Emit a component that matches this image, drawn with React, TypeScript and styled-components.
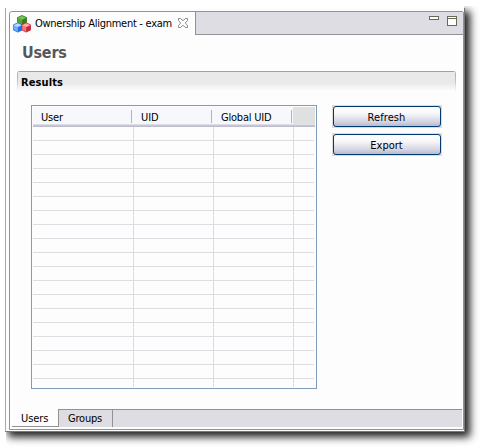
import React from "react";
import styled, { createGlobalStyle } from "styled-components";

const Global = createGlobalStyle`
  * { box-sizing: border-box; }
  body { margin: 0; background: #fff; overflow: hidden; }
`;

const Page = styled.div`
  width: 480px;
  height: 447px;
  padding: 8px 0 0 5px;
  background: #fff;
  color: #000;
  font: 11px/14px "DejaVu Sans Condensed", "DejaVu Sans", sans-serif;
  font-stretch: condensed;
`;

const Label = styled.span<{ $spacing?: number }>`
  white-space: nowrap;
  letter-spacing: ${(p) => p.$spacing ?? 0}px;
`;

const Shell = styled.div`
  width: 460px;
  height: 424px;
  padding: 3px 0 0 3px;
  background: #fdfdfd;
  border-left: 1px solid #a9a9ad;
  border-right: 1px solid #777;
  border-bottom: 1px solid #777;
  box-shadow: 4px 4px 8px 1px rgba(0, 0, 0, 0.88);
  clip-path: polygon(0 0, 459px 0, 459px -2px, 475px -2px, 475px 439px, 1px 439px, 1px 424px, 0 424px);
`;

const Frame = styled.div`
  display: flex;
  flex-direction: column;
  width: 455px;
  height: 419px;
  border: 1px solid #929295;
  border-radius: 3px 2px 0 0;
  background: #fdfdfd;
`;

const TabBar = styled.header`
  display: flex;
  height: 23px;
  flex: none;
`;

const EditorTab = styled.div`
  display: flex;
  align-items: flex-start;
  width: 185px;
  padding: 3px 0 0 3px;
  background: #fdfdfd;
  border-radius: 3px 0 0 0;

  > span { width: 143px; margin: 2px 0 0 4px; }
  > svg:last-child { margin-top: 3px; }
`;

const TabBarRest = styled.div`
  display: flex;
  flex: 1;
  justify-content: flex-end;
  gap: 8px;
  padding: 4px 6px 0 0;
  background: #dedde3;
  border-left: 1px solid #929295;
  border-bottom: 1px solid #929295;

  svg { display: block; }
`;

const Content = styled.main`
  display: flex;
  flex-direction: column;
  flex: 1;
  padding: 9px 7px 0;
`;

const Title = styled.h1`
  height: 18px;
  margin: 0 0 9px 5px;
  font-size: 16px;
  line-height: 18px;
  color: #57575b;
`;

const SectionHeader = styled.h2`
  width: 439px;
  height: 21px;
  margin: 0;
  padding: 5px 0 0 4px;
  font-size: 11px;
  line-height: 14px;
  border-radius: 3px 3px 0 0;
  background: linear-gradient(#a0a0a0, #a0a0a0) top / 100% 1px no-repeat,
    linear-gradient(#aaa, #bbb 8px, #fdfdfd) left / 1px 100% no-repeat,
    linear-gradient(#aaa, #bbb 8px, #fdfdfd) right / 1px 100% no-repeat,
    linear-gradient(#e9e9e9 12px, #fdfdfd 20px);
`;

const SectionBody = styled.section`
  display: flex;
  gap: 15px;
  padding: 13px 0 0 14px;
`;

const Table = styled.div`
  display: flex;
  flex-direction: column;
  width: 286px;
  height: 284px;
  padding: 1px;
  border: 1px solid #7f9db9;
`;

const HeaderRow = styled.div`
  display: grid;
  grid-template-columns: 100px 80px 80px 22px;
  height: 20px;
  background: linear-gradient(#f7f8fc 0 17px, #dddde7 17px 18px, #c7c7d6 18px 19px, #bdbdcd 19px);
`;

const HeaderCell = styled.div`
  padding: 4px 0 0 8px;
  background: linear-gradient(#b2b2c0, #b2b2c0) right 1px top 3px / 1px 13px no-repeat;
`;

const HeaderFiller = styled.div`
  height: 18px;
  background: #dfe1e1;
`;

const Rows = styled.div`
  display: grid;
  grid-auto-rows: 14px;
  height: 260px;
  overflow: hidden;
`;

const Row = styled.div`
  display: grid;
  grid-template-columns: 101px 80px 80px 20px;
`;

const Cell = styled.div<{ $last?: boolean }>`
  border-bottom: 1px solid #dcdce1;
  border-right: ${(p) => (p.$last ? "none" : "1px solid #dcdce1")};
`;

const Actions = styled.div`
  display: flex;
  flex-direction: column;
  gap: 5px;
`;

const ButtonEdge = styled.div`
  width: 110px;
  height: 23px;
  padding: 1px;
  background: #dcdcd8;
`;

const Button = styled.button`
  display: block;
  width: 108px;
  height: 21px;
  padding: 2px 1px 0 0;
  border: 1px solid #003c74;
  border-radius: 3px;
  color: #000;
  font: inherit;
  background: linear-gradient(#fff, #f8f8fb 6px, #e8e8f1 10px, #d3d3e1 15px, #b9b9d0);
`;

const BottomTabs = styled.nav`
  display: flex;
  height: 18px;
  flex: none;
  margin: 0 1px 2px 2px;
`;

const BottomTab = styled.div<{ $active?: boolean }>`
  width: ${(p) => (p.$active ? 46 : 55)}px;
  padding: ${(p) => (p.$active ? "3px 0 0 9px" : "2px 0 0 9px")};
  background: ${(p) => (p.$active ? "#fdfdfd" : "#dedde3")};
  border: 0 solid #929295;
  border-width: ${(p) => (p.$active ? "0 0 1px" : "1px 1px 0 1px")};
`;

const BottomRest = styled.div`
  flex: 1;
  background: #dedde3;
  border-top: 1px solid #929295;
`;

type CubeProps = { x: number; y: number; top: string; left: string; right: string; edge: string };

const Cube = ({ x, y, top, left, right, edge }: CubeProps) => (
  <g transform={`translate(${x} ${y})`}>
    <path d="M5 .5 9.5 2.6V7.6L5 9.8.5 7.6V2.6Z" fill={left} />
    <path d="M5 4.8 9.5 2.6V7.6L5 9.8Z" fill={right} />
    <path d="M5 .5 9.5 2.6 5 4.8.5 2.6Z" fill={top} />
    <path d="M5 .5 9.5 2.6V7.6L5 9.8.5 7.6V2.6Z" fill="none" stroke={edge} strokeWidth=".8" />
  </g>
);

const CubesIcon = () => (
  <svg width="18" height="18" viewBox="0 0 18 18">
    <Cube x={4} y={0} top="#79c452" left="#55a736" right="#327f20" edge="#347b25" />
    <Cube x={-0.2} y={7.3} top="#b1dcff" left="#6bafff" right="#276ee0" edge="#2b68ce" />
    <Cube x={8.2} y={7.3} top="#ffaaa6" left="#f0777b" right="#cc2636" edge="#c32d39" />
  </svg>
);

const CloseIcon = () => (
  <svg width="10" height="10" viewBox="0 0 10 10">
    <path
      d="M.5.5H2.5L5 2.7 7.5.5h2V2.5L7.3 5 9.5 7.5v2h-2L5 7.3 2.5 9.5h-2v-2L2.7 5 .5 2.5Z"
      fill="#fff"
      stroke="#82827a"
      strokeWidth=".9"
    />
  </svg>
);

const MinimizeIcon = () => (
  <svg width="10" height="4" viewBox="0 0 10 4" shapeRendering="crispEdges">
    <path d="M.5.5h9v3h-9Z" fill="#fff" stroke="#696957" />
  </svg>
);

const MaximizeIcon = () => (
  <svg width="10" height="10" viewBox="0 0 10 10" shapeRendering="crispEdges">
    <path d="M.5.5h9v9h-9ZM.5 2.5h9" fill="#fff" stroke="#696957" />
  </svg>
);

const rows = Array.from({ length: 19 }, (_, i) => i);

export default function App() {
  return (
    <Page>
      <Global />
      <Shell>
        <Frame>
          <TabBar>
            <EditorTab>
              <CubesIcon />
              <Label $spacing={-0.27}>Ownership Alignment - exam</Label>
              <CloseIcon />
            </EditorTab>
            <TabBarRest>
              <MinimizeIcon />
              <MaximizeIcon />
            </TabBarRest>
          </TabBar>
          <Content>
            <Title><Label $spacing={-0.2}>Users</Label></Title>
            <SectionHeader><Label $spacing={0.1}>Results</Label></SectionHeader>
            <SectionBody>
              <Table>
                <HeaderRow>
                  <HeaderCell><Label $spacing={-0.2}>User</Label></HeaderCell>
                  <HeaderCell><Label $spacing={-0.1}>UID</Label></HeaderCell>
                  <HeaderCell><Label $spacing={-0.2}>Global UID</Label></HeaderCell>
                  <HeaderFiller />
                </HeaderRow>
                <Rows>
                  {rows.map((row) => (
                    <Row key={row}>
                      <Cell />
                      <Cell />
                      <Cell />
                      <Cell $last />
                    </Row>
                  ))}
                </Rows>
              </Table>
              <Actions>
                <ButtonEdge><Button><Label $spacing={0.1}>Refresh</Label></Button></ButtonEdge>
                <ButtonEdge><Button><Label>Export</Label></Button></ButtonEdge>
              </Actions>
            </SectionBody>
          </Content>
          <BottomTabs>
            <BottomTab $active><Label $spacing={-0.1}>Users</Label></BottomTab>
            <BottomTab><Label $spacing={-0.2}>Groups</Label></BottomTab>
            <BottomRest />
          </BottomTabs>
        </Frame>
      </Shell>
    </Page>
  );
}
